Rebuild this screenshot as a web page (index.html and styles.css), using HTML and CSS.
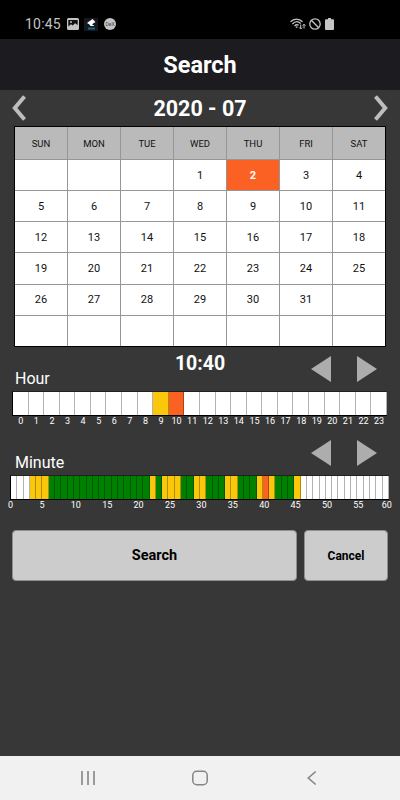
FILE: index.html
```html
<!DOCTYPE html>
<html lang="en">

<head>
    <meta charset="UTF-8">
    <meta name="viewport" content="width=device-width, initial-scale=1.0">
    <title>Search</title>
    <link rel="stylesheet" href="styles.css">
</head>

<body>
    <div class="status-bar">
        <span class="clock">10:45</span>
        <svg class="icon-picture" width="12" height="12" viewBox="0 0 12 12">
            <rect width="12" height="12" rx="1.5" fill="#c4c4c4"/>
            <path d="M1.3 2h9.4v5L8 5.2 5.8 7.5 4 6.2 1.3 8.4z" fill="#111"/>
            <circle cx="4" cy="4" r="1" fill="#c4c4c4"/>
        </svg>
        <svg class="icon-camera" width="14" height="13" viewBox="0 0 14 13">
            <rect width="14" height="13" rx="1" fill="#15181f"/>
            <path d="M3 5 8.500 1l3 3L8 6.200 10.500 8H6.500L5.500 6.500z" fill="#fff"/>
            <path d="M4 10.500h7" stroke="#17678a" stroke-width="2"/>
        </svg>
        <span class="badge">DeX</span>
        <div class="status-right">
            <svg width="16" height="12" viewBox="0 0 16 12" fill="none" stroke="#c4c4c4" stroke-width="1.3">
                <path d="M.5 3.8C4 .2 9 .2 12.5 3.8M2.4 6C5 3.2 8.3 3.2 10.7 5.4M4.5 8C6 6.5 7.3 6.5 8.6 7.3"/>
                <path d="M6.6 8.4v1.4" stroke-width="1.6"/>
                <path d="M10.7 6.5V11M9.2 9.5l1.5 1.5 1.5-1.5M14 10.5V6.2M12.5 7.7 14 6.2l1.5 1.5" stroke-width="1"/>
            </svg>
            <svg width="12" height="12" viewBox="0 0 12 12" fill="none" stroke="#c4c4c4" stroke-width="1.3">
                <circle cx="6" cy="6" r="5.2"/>
                <path d="M2.3 2.3l7.4 7.4"/>
            </svg>
            <svg class="icon-battery" width="9" height="12" viewBox="0 0 9 12">
                <path d="M3 0h3v1.3h2q1 0 1 1V11q0 1-1 1H1q-1 0-1-1V2.3q0-1 1-1h2z" fill="#c4c4c4"/>
            </svg>
        </div>
    </div>

    <h1 class="title">Search</h1>

    <div class="month-row">
        <svg width="14" height="26" viewBox="0 0 14 26" fill="none" stroke="#bdbdbd" stroke-width="4">
            <path d="M12.5 1.5 2.8 13l9.7 11.5"/>
        </svg>
        <span class="month">2020 - 07</span>
        <svg width="14" height="26" viewBox="0 0 14 26" fill="none" stroke="#bdbdbd" stroke-width="4">
            <path d="M1.5 1.5 11.2 13 1.5 24.5"/>
        </svg>
    </div>

    <div class="calendar" id="calendar"></div>

    <div class="control">
        <span class="label">Hour</span>
        <span class="time">10:40</span>
        <div class="arrows">
            <svg width="20" height="26" viewBox="0 0 20 26"><path d="M20 0v26L0 13z" fill="#adadad"/></svg>
            <svg width="20" height="26" viewBox="0 0 20 26"><path d="M0 0v26l20-13z" fill="#adadad"/></svg>
        </div>
    </div>
    <div class="bar hour-bar" id="hourBar"></div>
    <div class="ticks hour-ticks" id="hourTicks"></div>

    <div class="control minute-control">
        <span class="label">Minute</span>
        <div class="arrows">
            <svg width="20" height="26" viewBox="0 0 20 26"><path d="M20 0v26L0 13z" fill="#adadad"/></svg>
            <svg width="20" height="26" viewBox="0 0 20 26"><path d="M0 0v26l20-13z" fill="#adadad"/></svg>
        </div>
    </div>
    <div class="bar minute-bar" id="minuteBar"></div>
    <div class="ticks minute-ticks" id="minuteTicks"></div>

    <div class="buttons">
        <button type="button" class="button search">Search</button>
        <button type="button" class="button cancel">Cancel</button>
    </div>

    <div class="nav-bar">
        <svg width="16" height="16" viewBox="0 0 16 16" stroke="#858585" stroke-width="1.6">
            <path d="M2 1v14M8 1v14M14 1v14"/>
        </svg>
        <svg width="16" height="16" viewBox="0 0 16 16" fill="none" stroke="#858585" stroke-width="1.5">
            <rect x=".8" y="1.3" width="14.4" height="13.4" rx="4"/>
        </svg>
        <svg width="16" height="16" viewBox="0 0 16 16" fill="none" stroke="#858585" stroke-width="1.6">
            <path d="M11.7 1.5 4.3 8l7.4 6.5"/>
        </svg>
    </div>

    <script>
        // y = event, g = normal recording, o = selected, w = empty
        const hours = "wwwwwwwwwyowwwwwwwwwwwww";
        const minutes = "wwwyyyggggggggggggggggygyyyggyygggyygggyoygggywwwwwwwwwwwwww";

        function addCell(parent, text, className) {
            const cell = document.createElement("span");
            cell.textContent = text;
            cell.className = className;
            parent.appendChild(cell);
        }

        const calendar = document.getElementById("calendar");
        ["SUN", "MON", "TUE", "WED", "THU", "FRI", "SAT"].forEach(d => addCell(calendar, d, "weekday"));
        for (let i = 0; i < 42; i++) {
            const day = i - 2;
            addCell(calendar, day > 0 && day <= 31 ? day : "", day === 2 ? "day selected" : "day");
        }

        const hourBar = document.getElementById("hourBar");
        const hourTicks = document.getElementById("hourTicks");
        [...hours].forEach((type, i) => {
            addCell(hourBar, "", "slot " + type);
            addCell(hourTicks, i, "tick");
        });

        const minuteBar = document.getElementById("minuteBar");
        const minuteTicks = document.getElementById("minuteTicks");
        [...minutes].forEach(type => addCell(minuteBar, "", "slot " + type));
        for (let m = 0; m <= 60; m += 5) {
            addCell(minuteTicks, m, "tick");
        }
    </script>
</body>

</html>
```
FILE: styles.css
```css
* {
    box-sizing: border-box;
}

body {
    margin: 0;
    height: 800px;
    display: flex;
    flex-direction: column;
    background: #373737;
    color: #fff;
    font-family: Roboto, "Liberation Sans", sans-serif;
    overflow: hidden;
}

svg {
    display: block;
    flex: none;
}

.status-bar {
    height: 39px;
    padding: 9px 66px 0 25px;
    display: flex;
    align-items: center;
    background: #000;
    color: #c4c4c4;
}

.clock {
    width: 42px;
    font-size: 14px;
    letter-spacing: 0.2px;
}

.icon-camera {
    margin: 0 6px 0 5px;
}

.badge {
    width: 12px;
    height: 12px;
    border-radius: 50%;
    background: #c4c4c4;
    color: #444;
    font-size: 5px;
    line-height: 12px;
    text-align: center;
}

.status-right {
    margin-left: auto;
    display: flex;
    gap: 3px;
}

.icon-battery {
    margin-left: 1px;
}

.title {
    height: 51px;
    margin: 0;
    background: #1c1b1f;
    font-size: 23.5px;
    font-weight: 700;
    line-height: 53px;
    text-align: center;
}

.month-row {
    height: 36px;
    padding: 0 12px;
    display: flex;
    justify-content: space-between;
    align-items: center;
}

.month {
    font-size: 21.5px;
    font-weight: 700;
    padding-top: 1px;
}

.calendar {
    width: 372px;
    height: 221px;
    margin: 0 auto;
    display: grid;
    grid-template-columns: repeat(7, 1fr);
    grid-template-rows: 32px repeat(6, 1fr);
    gap: 1px;
    background: #969696;
    border: 1px solid #000;
    color: #111;
}

.weekday,
.day {
    display: flex;
    align-items: center;
    justify-content: center;
}

.weekday {
    background: #bababa;
    font-size: 9.5px;
}

.day {
    background: #fff;
    font-size: 11px;
}

.day.selected {
    background: #fa6123;
    color: #fff;
    font-weight: 700;
}

.control {
    position: relative;
    height: 44px;
    padding: 8px 23px 0 15px;
    display: flex;
    justify-content: space-between;
}

.label {
    padding-top: 14px;
    font-size: 16px;
    line-height: 19px;
}

/* selected time stays centered over the row */
.time {
    position: absolute;
    left: 0;
    right: 0;
    top: 6px;
    font-size: 19.5px;
    font-weight: 700;
    line-height: 22px;
    text-align: center;
}

.arrows {
    display: flex;
    gap: 26px;
    padding-top: 1px;
}

.bar {
    display: flex;
    height: 25px;
    border-top: 1px solid #222;
    border-bottom: 1px solid #000;
    border-left: 1px solid #000;
}

.hour-bar {
    margin: 0 13px 0 12px;
}

.minute-bar {
    margin: 0 11px 0 10px;
}

.slot {
    flex: 1;
    border-right: 1px solid rgba(0, 0, 0, 0.3);
}

.w {
    background: #fff;
}

.y {
    background: #fbc70a;
}

.g {
    background: #008000;
}

.o {
    background: #fa6123;
}

.ticks {
    display: flex;
    height: 14px;
    font-size: 9px;
    line-height: 11px;
}

.hour-ticks {
    margin: 0 13px;
}

.hour-ticks .tick {
    flex: 1;
    text-align: center;
}

.minute-ticks {
    margin: 0 10px 0 8px;
}

.minute-ticks .tick {
    width: 31.4px;
    flex: none;
}

.minute-ticks .tick:last-child {
    width: auto;
    margin-left: -3px;
}

.minute-control {
    height: 45px;
    padding-top: 9px;
}

.buttons {
    display: flex;
    gap: 7px;
    margin-top: 16px;
    padding: 0 12px;
}

.button {
    height: 51px;
    padding: 0;
    border: 1px solid #8f8f8f;
    border-radius: 4px;
    background: #ccc;
    color: #000;
    font-family: inherit;
    font-weight: 700;
}

.search {
    width: 285px;
    font-size: 14.5px;
}

.cancel {
    flex: 1;
    font-size: 12px;
}

.nav-bar {
    height: 44px;
    margin-top: auto;
    padding: 0 80px;
    display: flex;
    justify-content: space-between;
    align-items: center;
    background: #f1f1f1;
}
```
